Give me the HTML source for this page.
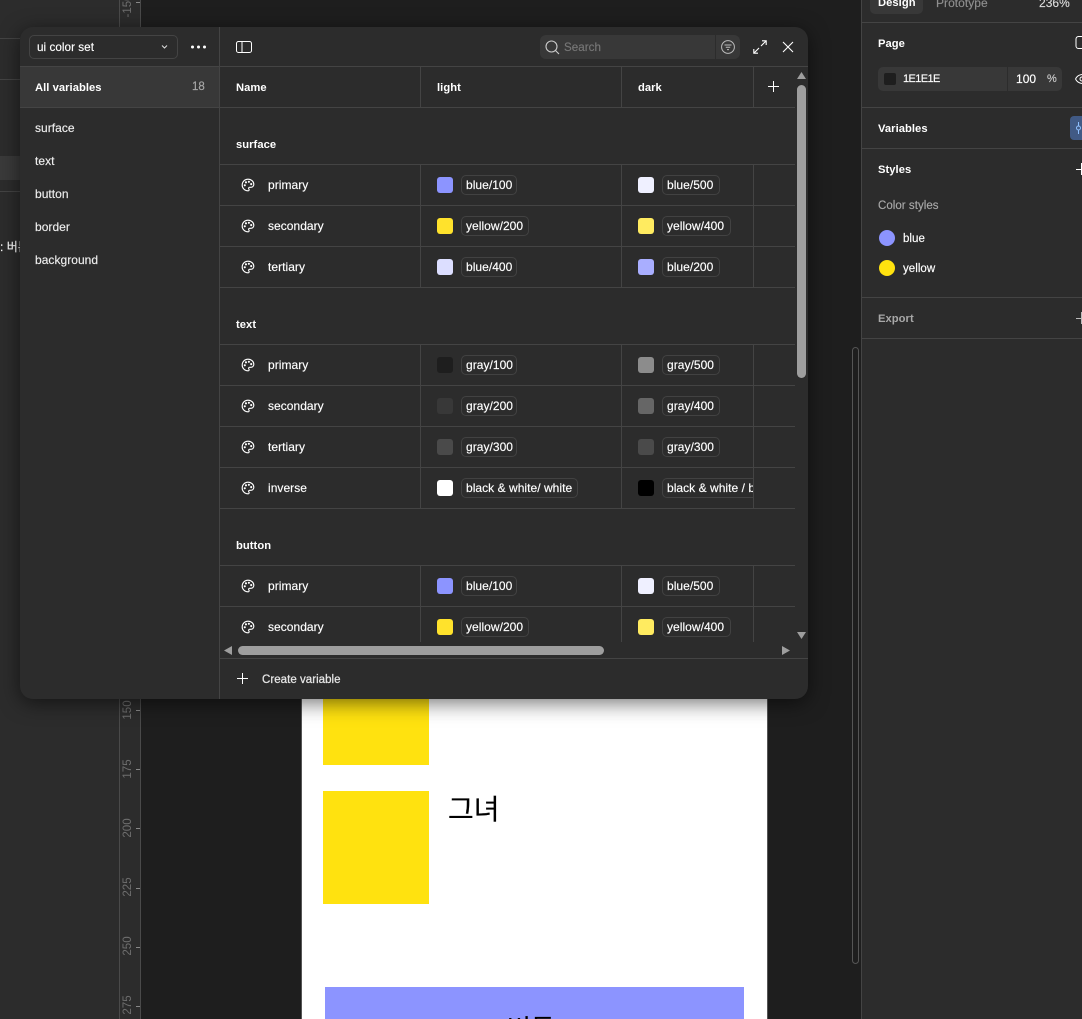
<!DOCTYPE html>
<html><head><meta charset="utf-8"><style>
*{box-sizing:border-box;margin:0;padding:0}
html,body{width:1082px;height:1019px;overflow:hidden;background:#1e1e1e}
body{position:relative;font:12px/16px "Liberation Sans","Noto Sans CJK KR",sans-serif;color:#fff;letter-spacing:.04px;-webkit-text-stroke:.15px currentColor}
.a{position:absolute}
.t{position:absolute;white-space:nowrap;line-height:16px}
.b{font-weight:bold;font-size:11.2px;letter-spacing:.05px;margin-top:1px;-webkit-text-stroke:0}
.hl{position:absolute;height:1px;background:#444}
.vl{position:absolute;width:1px;background:#444}
.r{position:absolute;left:220px;width:575px;height:41px;border-bottom:1px solid #444}
.r .p{position:absolute;left:21px;top:13px;width:14px;height:14px}
.r .n{position:absolute;left:48px;top:12px;white-space:nowrap}
.s{position:absolute;top:12px;width:16px;height:16px;border-radius:3px}
.c{position:absolute;top:10px;height:20px;border:1px solid #424242;border-radius:5px;padding:1px 4px;line-height:16px;white-space:nowrap;overflow:hidden}
.ru{position:absolute;color:#6e6e6e;font-size:11.5px;transform:rotate(-90deg);transform-origin:center;text-align:center;letter-spacing:0;line-height:14px;height:14px;width:30px;-webkit-text-stroke:0}
.tk{position:absolute;left:136px;width:4px;height:1px;background:#888}
</style></head><body>
<svg width="0" height="0" style="position:absolute"><defs>
<g id="pal" fill="none" stroke="#fff" stroke-width="1.9" stroke-linecap="round" stroke-linejoin="round"><path d="M12 22a1 1 0 0 1 0-20 10 9 0 0 1 10 9 5 5 0 0 1-5 5h-2.25a1.75 1.75 0 0 0-1.4 2.8l.3.4a1.75 1.75 0 0 1-1.4 2.8z"/><circle cx="13.5" cy="6.5" r=".9" fill="#fff"/><circle cx="17.5" cy="10.5" r=".9" fill="#fff"/><circle cx="6.5" cy="12.5" r=".9" fill="#fff"/><circle cx="8.5" cy="7.5" r=".9" fill="#fff"/></g>
</defs></svg>

<!-- left panel & rulers -->
<div class="a" style="left:0;top:0;width:141px;height:1019px;background:#2c2c2c"></div>
<div class="vl" style="left:119px;top:0;height:1019px;background:#4a4a4a"></div>
<div class="vl" style="left:140px;top:0;height:1019px;background:#4a4a4a"></div>
<div class="hl" style="left:0;top:38px;width:20px"></div>
<div class="hl" style="left:0;top:79px;width:20px"></div>
<div class="a" style="left:0;top:156px;width:20px;height:24px;background:#3a3a3a"></div>
<div class="hl" style="left:0;top:191px;width:20px"></div>
<div class="t" style="left:0;top:239px;font-size:12px">: 버튼</div>
<div class="ru" style="left:113px;top:-1px">-150</div><div class="tk" style="top:2px"></div>
<div class="ru" style="left:113px;top:703px">150</div><div class="tk" style="top:710px"></div>
<div class="ru" style="left:113px;top:762px">175</div><div class="tk" style="top:769px"></div>
<div class="ru" style="left:113px;top:821px">200</div><div class="tk" style="top:828px"></div>
<div class="ru" style="left:113px;top:880px">225</div><div class="tk" style="top:888px"></div>
<div class="ru" style="left:113px;top:939px">250</div><div class="tk" style="top:947px"></div>
<div class="ru" style="left:113px;top:998px">275</div><div class="tk" style="top:1006px"></div>

<!-- artboard -->
<div class="a" style="left:301px;top:100px;width:467px;height:919px;background:#fff;border-left:1px solid #555;border-right:1px solid #555"></div>
<div class="a" style="left:323px;top:660px;width:106px;height:105px;background:#ffe20f"></div>
<div class="a" style="left:323px;top:791px;width:106px;height:113px;background:#ffe20f"></div>
<div class="t" style="left:448px;top:792px;font-size:28px;line-height:36px;color:#000;letter-spacing:0">그녀</div>
<div class="a" style="left:325px;top:987px;width:419px;height:32px;background:#8c94ff;overflow:hidden"><div class="t" style="left:182px;top:25px;font-size:26px;line-height:34px;color:#000;letter-spacing:0">버튼</div></div>

<!-- canvas scrollbar -->
<div class="a" style="left:852px;top:347px;width:7px;height:617px;border:1px solid #555;border-radius:4px"></div>

<!-- right panel -->
<div class="a" style="left:861px;top:0;width:221px;height:1019px;background:#2c2c2c;border-left:1px solid #444"></div>
<div class="a" style="left:870px;top:-10px;width:53px;height:24px;background:#383838;border-radius:5px"></div>
<div class="t b" style="left:878px;top:-6px">Design</div>
<div class="t" style="left:936px;top:-5px;color:#8f8f8f">Prototype</div>
<div class="t" style="left:1039px;top:-5px;color:#ddd">236%</div>
<div class="hl" style="left:862px;top:22px;width:220px"></div>
<div class="t b" style="left:878px;top:35px">Page</div>
<svg class="a" style="left:1075px;top:36px" width="7" height="13" fill="none" stroke="#fff" stroke-width="1"><path d="M7 .5H3.5A2.5 2.5 0 0 0 1 3v7a2.5 2.5 0 0 0 2.5 2.5H7"/></svg>
<div class="a" style="left:878px;top:67px;width:184px;height:24px;background:#383838;border-radius:5px"></div>
<div class="a" style="left:884px;top:73px;width:12px;height:12px;background:#1e1e1e;border-radius:2px"></div>
<div class="t" style="left:903px;top:71px;font-size:11px;letter-spacing:-.6px">1E1E1E</div>
<div class="vl" style="left:1007px;top:67px;height:24px;background:#2c2c2c"></div>
<div class="t" style="left:1016px;top:71px">100</div>
<div class="t" style="left:1047px;top:71px;color:#ccc;font-size:11px">%</div>
<svg class="a" style="left:1075px;top:72px" width="7" height="14" fill="none" stroke="#fff" stroke-width="1"><path d="M.5 7C2 4 5 2.5 8 2.5M.5 7C2 10 5 11.5 8 11.5"/><circle cx="7" cy="7" r="2"/></svg>
<div class="hl" style="left:862px;top:107px;width:220px"></div>
<div class="t b" style="left:878px;top:120px">Variables</div>
<div class="a" style="left:1070px;top:116px;width:14px;height:24px;background:#415a85;border-radius:4px 0 0 4px"></div>
<svg class="a" style="left:1075px;top:121px" width="7" height="14" fill="none" stroke="#8fc0ff" stroke-width="1"><path d="M3.5 1v4M3.5 9v4"/><circle cx="3.5" cy="7" r="2"/></svg>
<div class="hl" style="left:862px;top:148px;width:220px"></div>
<div class="t b" style="left:878px;top:161px">Styles</div>
<svg class="a" style="left:1076px;top:163px" width="6" height="12" stroke="#fff"><path d="M0 6.5H6M5.5 0V12"/></svg>
<div class="t" style="left:878px;top:198px;color:#a8a8a8;font-size:11.5px">Color styles</div>
<div class="a" style="left:879px;top:230px;width:16px;height:16px;border-radius:50%;background:#8c94ff"></div>
<div class="t" style="left:903px;top:231px;font-size:11.5px">blue</div>
<div class="a" style="left:879px;top:260px;width:16px;height:16px;border-radius:50%;background:#ffe20f"></div>
<div class="t" style="left:903px;top:261px;font-size:11.5px">yellow</div>
<div class="hl" style="left:862px;top:297px;width:220px"></div>
<div class="t b" style="left:878px;top:310px;color:#a8a8a8">Export</div>
<svg class="a" style="left:1076px;top:312px" width="6" height="12" stroke="#bbb"><path d="M0 6.5H6M5.5 0V12"/></svg>
<div class="hl" style="left:862px;top:338px;width:220px"></div>

<!-- modal -->
<div class="a" style="left:20px;top:27px;width:788px;height:672px;background:#2c2c2c;border-radius:13px;box-shadow:0 4px 20px rgba(0,0,0,.55)"></div>
<div class="a" style="left:20px;top:67px;width:199px;height:40px;background:#383838"></div>
<div class="vl" style="left:219px;top:27px;height:672px"></div>
<div class="hl" style="left:20px;top:66px;width:788px"></div>
<div class="hl" style="left:20px;top:107px;width:775px"></div>
<div class="a" style="left:29px;top:35px;width:149px;height:24px;border:1px solid #444;border-radius:5px"></div>
<div class="t" style="left:37px;top:40px;font-size:11.7px">ui color set</div>
<svg class="a" style="left:161px;top:44px" width="7" height="6" fill="none" stroke="#ddd"><path d="M1 1.5L3.5 4 6 1.5"/></svg>
<svg class="a" style="left:190px;top:44px" width="18" height="6" fill="#fff"><circle cx="2.5" cy="3" r="1.5"/><circle cx="8.5" cy="3" r="1.5"/><circle cx="14.5" cy="3" r="1.5"/></svg>
<div class="t b" style="left:35px;top:79px">All variables</div>
<div class="t" style="left:192px;top:79px;color:#a8a8a8;font-size:11.5px">18</div>
<div class="t" style="left:35px;top:120px;color:#eee">surface</div>
<div class="t" style="left:35px;top:153px;color:#eee">text</div>
<div class="t" style="left:35px;top:186px;color:#eee">button</div>
<div class="t" style="left:35px;top:219px;color:#eee">border</div>
<div class="t" style="left:35px;top:252px;color:#eee">background</div>

<svg class="a" style="left:236px;top:41px" width="16" height="12" fill="none" stroke="#fff"><rect x=".5" y=".5" width="15" height="11" rx="2"/><path d="M6 .5V11.5"/></svg>
<div class="a" style="left:540px;top:35px;width:200px;height:24px;background:#383838;border-radius:6px"></div>
<div class="vl" style="left:715px;top:35px;height:24px;background:#2c2c2c"></div>
<svg class="a" style="left:545px;top:40px" width="15" height="15" fill="none" stroke="#ccc" stroke-width="1.1"><circle cx="6.5" cy="6.5" r="5.5"/><path d="M10.5 10.5L14 14"/></svg>
<div class="t" style="left:564px;top:40px;color:#777;font-size:11.6px">Search</div>
<svg class="a" style="left:721px;top:40px" width="14" height="14" fill="none" stroke="#bbb"><circle cx="7" cy="7" r="6.4"/><path d="M3.5 5H10.5M4.8 7.3H9.2M6 9.6H8"/></svg>
<svg class="a" style="left:753px;top:40px" width="14" height="14" fill="none" stroke="#fff" stroke-width="1.1"><path d="M8 6L13 1M9 .8H13.2V5M6 8L1 13M5 13.2H.8V9"/></svg>
<svg class="a" style="left:782px;top:41px" width="12" height="12" fill="none" stroke="#fff" stroke-width="1.1"><path d="M1 1L11 11M11 1L1 11"/></svg>

<!-- header -->
<div class="t b" style="left:236px;top:79px">Name</div>
<div class="t b" style="left:437px;top:79px">light</div>
<div class="t b" style="left:638px;top:79px">dark</div>
<svg class="a" style="left:768px;top:81px" width="11" height="11" stroke="#fff"><path d="M0 5.5H11M5.5 0V11"/></svg>
<div class="vl" style="left:420px;top:67px;height:40px"></div>
<div class="vl" style="left:621px;top:67px;height:40px"></div>
<div class="vl" style="left:753px;top:67px;height:40px"></div>

<!-- table -->
<div class="a" style="left:0;top:0;width:1082px;height:642px;overflow:hidden">
<div class="t b" style="left:236px;top:136px">surface</div>
<div class="hl" style="left:220px;top:164px;width:575px"></div>
<div class="vl" style="left:420px;top:164px;height:123px"></div><div class="vl" style="left:621px;top:164px;height:123px"></div><div class="vl" style="left:753px;top:164px;height:123px"></div>
<div class="r" style="top:165px"><svg class="p" viewBox="0 0 24 24"><use href="#pal"/></svg><span class="n">primary</span><i class="s" style="left:217px;background:#8c94ff"></i><span class="c" style="left:241px;width:56px">blue/100</span><i class="s" style="left:418px;background:#eff0ff"></i><span class="c" style="left:442px;width:58px">blue/500</span></div>
<div class="r" style="top:206px"><svg class="p" viewBox="0 0 24 24"><use href="#pal"/></svg><span class="n">secondary</span><i class="s" style="left:217px;background:#ffe22c"></i><span class="c" style="left:241px;width:68px">yellow/200</span><i class="s" style="left:418px;background:#ffeb60"></i><span class="c" style="left:442px;width:69px">yellow/400</span></div>
<div class="r" style="top:247px"><svg class="p" viewBox="0 0 24 24"><use href="#pal"/></svg><span class="n">tertiary</span><i class="s" style="left:217px;background:#dcdeff"></i><span class="c" style="left:241px;width:56px">blue/400</span><i class="s" style="left:418px;background:#a9aeff"></i><span class="c" style="left:442px;width:58px">blue/200</span></div>

<div class="t b" style="left:236px;top:316px">text</div>
<div class="hl" style="left:220px;top:344px;width:575px"></div>
<div class="vl" style="left:420px;top:344px;height:164px"></div><div class="vl" style="left:621px;top:344px;height:164px"></div><div class="vl" style="left:753px;top:344px;height:164px"></div>
<div class="r" style="top:345px"><svg class="p" viewBox="0 0 24 24"><use href="#pal"/></svg><span class="n">primary</span><i class="s" style="left:217px;background:#1e1e1e"></i><span class="c" style="left:241px;width:56px">gray/100</span><i class="s" style="left:418px;background:#8c8c8c"></i><span class="c" style="left:442px;width:58px">gray/500</span></div>
<div class="r" style="top:386px"><svg class="p" viewBox="0 0 24 24"><use href="#pal"/></svg><span class="n">secondary</span><i class="s" style="left:217px;background:#383838"></i><span class="c" style="left:241px;width:56px">gray/200</span><i class="s" style="left:418px;background:#666"></i><span class="c" style="left:442px;width:58px">gray/400</span></div>
<div class="r" style="top:427px"><svg class="p" viewBox="0 0 24 24"><use href="#pal"/></svg><span class="n">tertiary</span><i class="s" style="left:217px;background:#4a4a4a"></i><span class="c" style="left:241px;width:56px">gray/300</span><i class="s" style="left:418px;background:#4a4a4a"></i><span class="c" style="left:442px;width:58px">gray/300</span></div>
<div class="r" style="top:468px"><svg class="p" viewBox="0 0 24 24"><use href="#pal"/></svg><span class="n">inverse</span><i class="s" style="left:217px;background:#fff"></i><span class="c" style="left:241px;width:117px">black &amp; white/ white</span><i class="s" style="left:418px;background:#000"></i><div class="a" style="left:442px;top:0;width:91px;height:40px;overflow:hidden"><span class="c" style="left:0;width:130px">black &amp; white / black</span></div></div>

<div class="t b" style="left:236px;top:537px">button</div>
<div class="hl" style="left:220px;top:565px;width:575px"></div>
<div class="vl" style="left:420px;top:565px;height:80px"></div><div class="vl" style="left:621px;top:565px;height:80px"></div><div class="vl" style="left:753px;top:565px;height:80px"></div>
<div class="r" style="top:566px"><svg class="p" viewBox="0 0 24 24"><use href="#pal"/></svg><span class="n">primary</span><i class="s" style="left:217px;background:#8c94ff"></i><span class="c" style="left:241px;width:56px">blue/100</span><i class="s" style="left:418px;background:#eff0ff"></i><span class="c" style="left:442px;width:58px">blue/500</span></div>
<div class="r" style="top:607px"><svg class="p" viewBox="0 0 24 24"><use href="#pal"/></svg><span class="n">secondary</span><i class="s" style="left:217px;background:#ffe22c"></i><span class="c" style="left:241px;width:68px">yellow/200</span><i class="s" style="left:418px;background:#ffeb60"></i><span class="c" style="left:442px;width:69px">yellow/400</span></div>
</div>

<!-- scrollbars -->
<svg class="a" style="left:797px;top:72px" width="9" height="7" fill="#9e9e9e"><path d="M4.5 0L9 7H0z"/></svg>
<div class="a" style="left:797px;top:85px;width:9px;height:293px;background:#9e9e9e;border-radius:5px"></div>
<svg class="a" style="left:797px;top:632px" width="9" height="7" fill="#9e9e9e"><path d="M0 0H9L4.5 7z"/></svg>
<svg class="a" style="left:224px;top:646px" width="8" height="9" fill="#9e9e9e"><path d="M0 4.5L8 0V9z"/></svg>
<div class="a" style="left:238px;top:646px;width:366px;height:9px;background:#9e9e9e;border-radius:5px"></div>
<svg class="a" style="left:782px;top:646px" width="8" height="9" fill="#9e9e9e"><path d="M8 4.5L0 0V9z"/></svg>
<div class="hl" style="left:220px;top:658px;width:588px"></div>
<svg class="a" style="left:237px;top:673px" width="11" height="11" stroke="#fff"><path d="M0 5.5H11M5.5 0V11"/></svg>
<div class="t" style="left:262px;top:672px;color:#e6e6e6;font-size:11.5px;-webkit-text-stroke:.25px #e6e6e6">Create variable</div>
</body></html>
